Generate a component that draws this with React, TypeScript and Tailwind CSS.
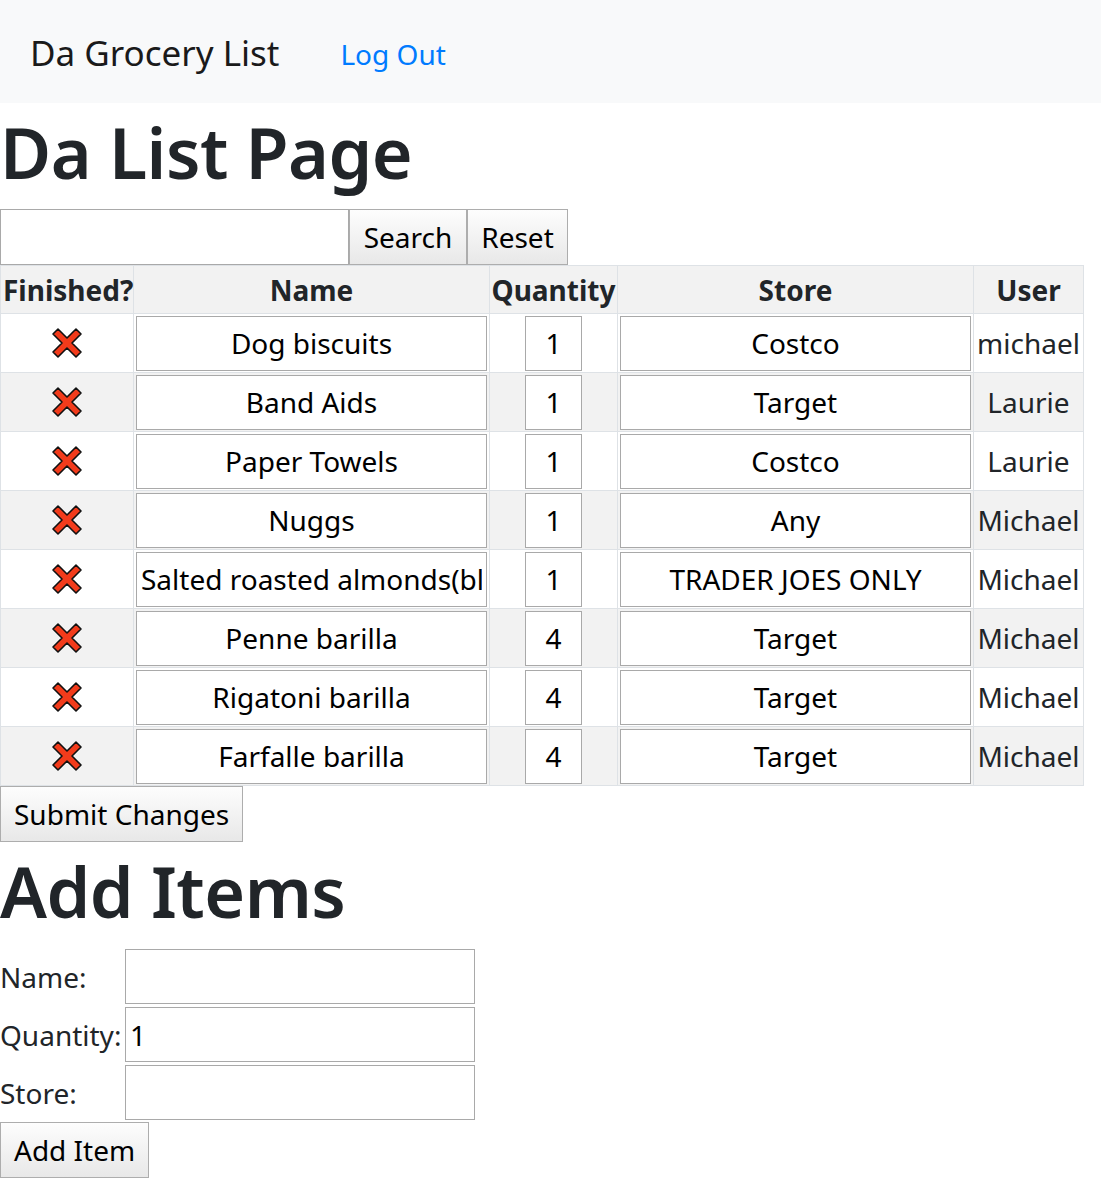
const items = [
  { name: "Dog biscuits", qty: "1", store: "Costco", user: "michael" },
  { name: "Band Aids", qty: "1", store: "Target", user: "Laurie" },
  { name: "Paper Towels", qty: "1", store: "Costco", user: "Laurie" },
  { name: "Nuggs", qty: "1", store: "Any", user: "Michael" },
  { name: "Salted roasted almonds(blue diamond)", qty: "1", store: "TRADER JOES ONLY", user: "Michael" },
  { name: "Penne barilla", qty: "4", store: "Target", user: "Michael" },
  { name: "Rigatoni barilla", qty: "4", store: "Target", user: "Michael" },
  { name: "Farfalle barilla", qty: "4", store: "Target", user: "Michael" },
];

function CrossMark() {
  return (
    <svg width="32" height="32" viewBox="0 0 32 32" className="mx-auto block">
      <polygon
        points="2,7 7,2 16,11 25,2 30,7 21,16 30,25 25,30 16,21 7,30 2,25 11,16"
        fill="#f23b1b"
        stroke="#111"
        strokeWidth="1.6"
        strokeLinejoin="round"
      />
    </svg>
  );
}

const btn =
  "border border-[#adadad] bg-gradient-to-b from-[#fdfdfd] to-[#e8e8e8] text-black text-[28px] leading-none";
const field = "border border-[#a9a9a9] bg-white text-black text-[28px] outline-none";

export default function App() {
  return (
    <div
      className="min-h-[1180px] bg-white text-[#212529] text-[28px]"
      style={{ fontFamily: '"Noto Sans", "Open Sans", sans-serif' }}
    >
      {/* navbar */}
      <nav className="h-[103px] bg-[#f8f9fa] flex items-center pl-[30px] pt-[4px]">
        <span className="text-[35px] text-[#1a1a1a]">Da Grocery List</span>
        <a className="ml-[61px] text-[28px] text-[#007bff]">Log Out</a>
      </nav>

      <h1 className="text-[70px] font-semibold tracking-[-0.5px] leading-[84px] mt-[7px] mb-[15px]">Da List Page</h1>

      <div className="flex h-[56px]">
        <input className={`${field} w-[349px] h-[56px]`} />
        <button className={`${btn} w-[118px] h-[56px]`}>Search</button>
        <button className={`${btn} w-[101px] h-[56px]`}>Reset</button>
      </div>

      <table className="border-collapse table-fixed w-[1083px]">
        <colgroup>
          <col className="w-[133px]" />
          <col className="w-[356px]" />
          <col className="w-[128px]" />
          <col className="w-[356px]" />
          <col className="w-[110px]" />
        </colgroup>
        <tbody>
          <tr className="h-[48px] bg-[#f2f2f2] font-bold">
            <td className="border border-[#dee2e6] px-[2px] text-center">Finished?</td>
            <td className="border border-[#dee2e6] text-center">Name</td>
            <td className="border border-[#dee2e6] text-center">Quantity</td>
            <td className="border border-[#dee2e6] text-center">Store</td>
            <td className="border border-[#dee2e6] text-center">User</td>
          </tr>
          {items.map((it, i) => (
            <tr key={i} className={`h-[59px] ${i % 2 === 1 ? "bg-[#f2f2f2]" : "bg-white"}`}>
              <td className="border border-[#dee2e6] text-center">
                <CrossMark />
              </td>
              <td className="border border-[#dee2e6] px-[2px]">
                <input
                  readOnly
                  value={it.name}
                  className={`${field} w-full h-[55px] text-center px-[4px] block`}
                />
              </td>
              <td className="border border-[#dee2e6] px-[2px]">
                <input
                  readOnly
                  value={it.qty}
                  className={`${field} w-[57px] h-[55px] text-center mx-auto block`}
                />
              </td>
              <td className="border border-[#dee2e6] px-[2px]">
                <input
                  readOnly
                  value={it.store}
                  className={`${field} w-full h-[55px] text-center block`}
                />
              </td>
              <td className="border border-[#dee2e6] text-center whitespace-nowrap">{it.user}</td>
            </tr>
          ))}
        </tbody>
      </table>

      <button className={`${btn} h-[56px] px-[13px] block`}>Submit Changes</button>

      <h1 className="text-[70px] font-semibold tracking-[-0.5px] leading-[84px] mt-[7px] mb-[16px]">Add Items</h1>

      <div className="flex flex-col gap-[3px]">
        <div className="flex items-center h-[55px]">
          <label className="w-[125px]">Name:</label>
          <input className={`${field} w-[350px] h-[55px]`} />
        </div>
        <div className="flex items-center h-[55px]">
          <label className="w-[125px]">Quantity:</label>
          <input readOnly value="1" className={`${field} w-[350px] h-[55px] px-[4px]`} />
        </div>
        <div className="flex items-center h-[55px]">
          <label className="w-[125px]">Store:</label>
          <input className={`${field} w-[350px] h-[55px]`} />
        </div>
      </div>
      <button className={`${btn} h-[56px] px-[13px] mt-[2px] block`}>Add Item</button>
    </div>
  );
}
